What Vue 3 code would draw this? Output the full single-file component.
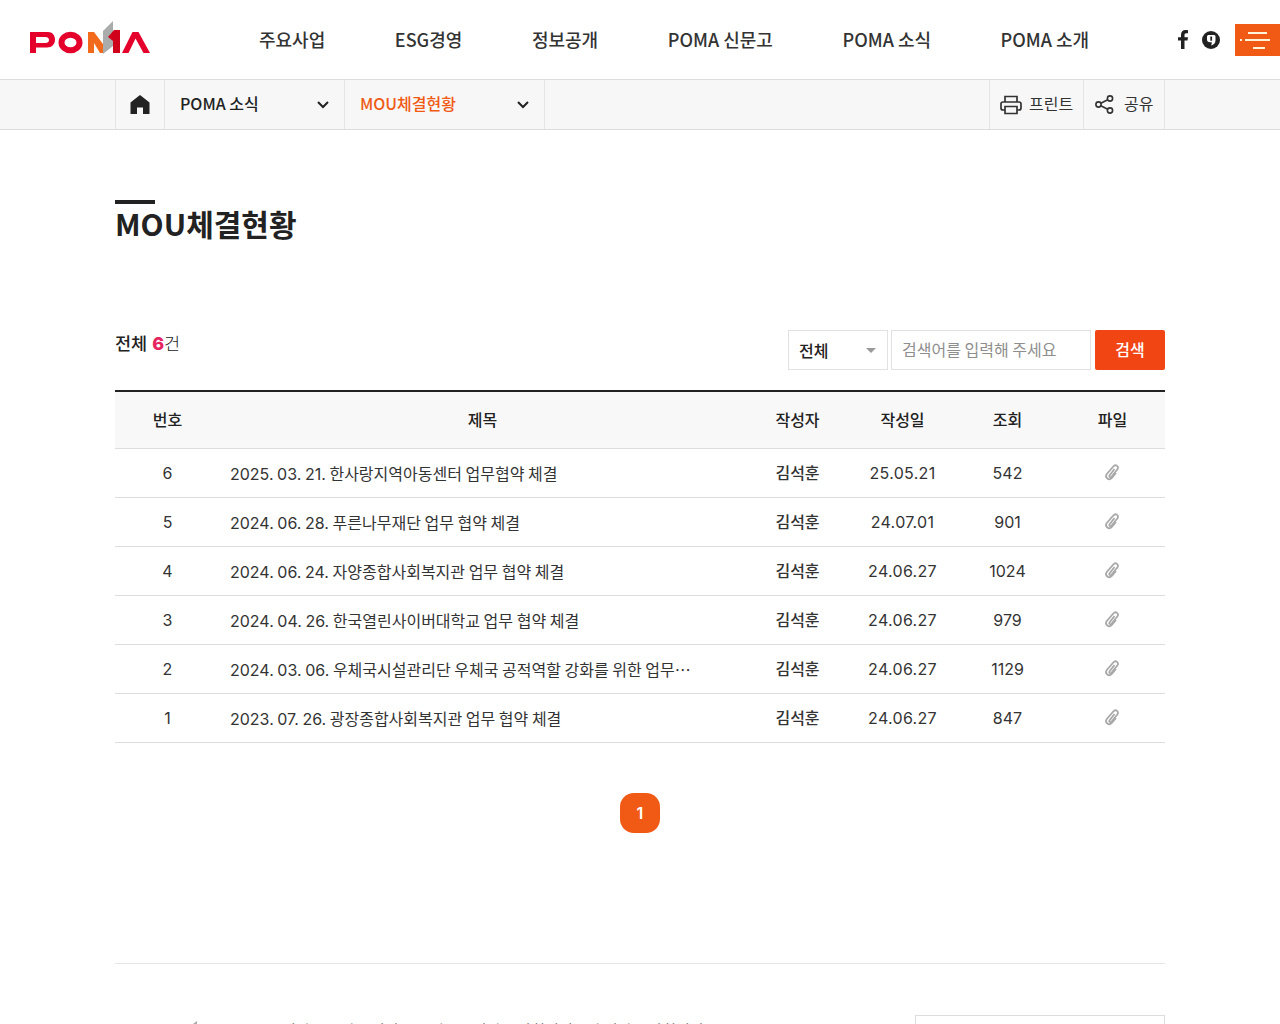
<template>
  <div class="page">
    <header class="top">
      <a class="logo" href="#" aria-label="POMA">
        <svg width="120" height="34" viewBox="0 -1 120 34">
          <path fill-rule="evenodd" d="M0 10H18C22.500 10 25 13.500 25 17.500C25 22 22 25.500 17 25.500H6V31H0zM6 15V21H15.500C17.500 21 19 19.800 19 18C19 16 17.500 15 15.500 15z" fill="#e4002b" />
          <ellipse cx="40.500" cy="20.500" rx="9" ry="7.800" fill="none" stroke="#e4002b" stroke-width="6" />
          <path d="M58 31V10h6L73 22v9h-3L64 21v10z" fill="#f26a1b" />
          <path d="M73 9l10-10v25l-10 8z" fill="#a9acab" />
          <path d="M78 15l6-7h6v23h-7V19z" fill="#d0021b" />
          <path d="M92 31l10.500-21h6L120 31h-6.500l-8-14.500L98.500 31z" fill="#e4002b" />
        </svg>
      </a>
      <nav class="gnb">
        <a v-for="m in menus" :key="m" href="#">{{ m }}</a>
      </nav>
      <div class="top-right">
        <svg class="sns" width="10" height="19" viewBox="0 0 10 19">
          <path d="M3 19V10.500H0V7.200h3V4.800C3 1.700 4.800 0 7.500 0c1 0 1.800.1 2.500.2v3H8.300C7 3.200 6.500 3.900 6.500 5v2.200H10l-.5 3.300h-3V19z" fill="#222" />
        </svg>
        <svg class="sns" width="18" height="18" viewBox="0 0 18 18">
          <circle cx="9" cy="9" r="9" fill="#222" />
          <path d="M5 5.500C5 4.500 6 4 7 4h5c1 0 1.500.8 1.500 1.700v3.600c0 2.700-1.700 4.700-4.500 5.200 .6-1 .8-2 .8-3.200H8C6 11.300 5 10.300 5 8.500z" fill="#fff" />
          <rect x="8.300" y="5.500" width="1.800" height="4.200" fill="#222" />
        </svg>
        <button class="all-menu" aria-label="menu">
          <i class="dot"></i><i class="l1"></i><i class="l2"></i><i class="l3"></i>
        </button>
      </div>
    </header>

    <div class="crumbs">
      <div class="inner">
        <a class="home" href="#" aria-label="home">
          <svg width="20" height="19" viewBox="0 0 20 19">
            <path d="M10 0L19.500 7.500V19H13V12.500H7V19H.5V7.500z" fill="#222" />
          </svg>
        </a>
        <div class="crumb first">
          <span>POMA 소식</span>
          <svg width="12" height="8" viewBox="0 0 12 8"><path d="M1 1l5 5 5-5" fill="none" stroke="#222" stroke-width="2" /></svg>
        </div>
        <div class="crumb second">
          <span>MOU체결현황</span>
          <svg width="12" height="8" viewBox="0 0 12 8"><path d="M1 1l5 5 5-5" fill="none" stroke="#222" stroke-width="2" /></svg>
        </div>
        <div class="tools">
          <a class="print" href="#">
            <svg width="22" height="20" viewBox="0 0 22 20" fill="none" stroke="#333" stroke-width="1.700">
              <path d="M5 7V1.500h12V7" />
              <path d="M5 15H3a2 2 0 0 1-2-2V9a2 2 0 0 1 2-2h16a2 2 0 0 1 2 2v4a2 2 0 0 1-2 2h-2" />
              <path d="M5 11.500h12v7H5z" />
            </svg>
            <span>프린트</span>
          </a>
          <a class="share" href="#">
            <svg width="19" height="19" viewBox="0 0 19 19" fill="none" stroke="#333" stroke-width="1.600">
              <circle cx="3.500" cy="9.500" r="2.600" />
              <circle cx="15" cy="3.500" r="2.600" />
              <circle cx="15" cy="15.500" r="2.600" />
              <path d="M5.800 8.300l6.900-3.600M5.800 10.700l6.900 3.600" />
            </svg>
            <span>공유</span>
          </a>
        </div>
      </div>
    </div>

    <main class="content">
      <h1 class="title">MOU체결현황</h1>

      <div class="board-top">
        <p class="count">전체 <b>6</b><span>건</span></p>
        <form class="search" @submit.prevent>
          <div class="select">전체<i></i></div>
          <input type="text" placeholder="검색어를 입력해 주세요" />
          <button type="submit">검색</button>
        </form>
      </div>

      <table class="board">
        <colgroup>
          <col class="c-s" /><col /><col class="c-s" /><col class="c-s" /><col class="c-s" /><col class="c-s" />
        </colgroup>
        <thead>
          <tr>
            <th>번호</th><th>제목</th><th>작성자</th><th>작성일</th><th>조회</th><th>파일</th>
          </tr>
        </thead>
        <tbody>
          <tr v-for="r in rows" :key="r.no">
            <td>{{ r.no }}</td>
            <td class="subject"><a href="#">{{ r.title }}<span v-if="r.cut" class="more">⋯</span></a></td>
            <td class="writer">김석훈</td>
            <td class="date">{{ r.date }}</td>
            <td>{{ r.views }}</td>
            <td>
              <svg class="clip" width="16" height="18" viewBox="0 0 16 18" fill="none" stroke="#a8a8a8" stroke-width="1.800">
                <path d="M10.500 5L5.500 11.500c-.8 1.200 1 2.500 2 1.300l5.800-7.300c2.300-3-1.700-5.700-4-3L2.800 10c-2.500 3.500 2.200 7 5 4l4.200-5" />
              </svg>
            </td>
          </tr>
        </tbody>
      </table>

      <div class="paging"><a href="#">1</a></div>
    </main>

    <footer class="foot">
      <div class="foot-inner">
        <div class="foot-left">
          <svg width="130" height="34" viewBox="0 0 130 34"><path d="M70 9l12-9v34H70z" fill="#a9acab" /></svg>
          <p>경기도 수원시 팔달구 효원로 1 경기도 사회서비스원 경기도 사회서비</p>
        </div>
        <div class="family"></div>
      </div>
    </footer>
  </div>
</template>

<script setup>
const menus = ["주요사업", "ESG경영", "정보공개", "POMA 신문고", "POMA 소식", "POMA 소개"];

const rows = [
  { no: 6, title: "2025. 03. 21. 한사랑지역아동센터 업무협약 체결", date: "25.05.21", views: 542 },
  { no: 5, title: "2024. 06. 28. 푸른나무재단 업무 협약 체결", date: "24.07.01", views: 901 },
  { no: 4, title: "2024. 06. 24. 자양종합사회복지관 업무 협약 체결", date: "24.06.27", views: 1024 },
  { no: 3, title: "2024. 04. 26. 한국열린사이버대학교 업무 협약 체결", date: "24.06.27", views: 979 },
  { no: 2, title: "2024. 03. 06. 우체국시설관리단 우체국 공적역할 강화를 위한 업무", cut: true, date: "24.06.27", views: 1129 },
  { no: 1, title: "2023. 07. 26. 광장종합사회복지관 업무 협약 체결", date: "24.06.27", views: 847 },
];
</script>

<style>
html, body { margin: 0; overflow-x: hidden; background: #fff; }
</style>

<style scoped>
.page {
  font-family: "Noto Sans CJK KR", "Noto Sans", sans-serif;
  color: #222;
  height: 1024px;
  overflow: hidden;
}
a { color: inherit; text-decoration: none; }

.top {
  height: 79px;
  border-bottom: 1px solid #ddd;
  display: flex;
  align-items: center;
  padding-left: 30px;
}
.logo { display: block; width: 120px; height: 34px; margin-top: -3px; }
.gnb {
  display: flex;
  gap: 69.600px;
  margin-left: 109px;
  padding-bottom: 2px;
  font-size: 18px;
  font-weight: 500;
  color: #333;
}
.top-right {
  margin-left: auto;
  display: flex;
  align-items: center;
}
.sns { display: block; }
.sns + .sns { margin-left: 14px; margin-right: 15px; }
.all-menu {
  width: 45px;
  height: 32px;
  background: #f05a14;
  border: 0;
  padding: 0;
  position: relative;
}
.all-menu i { position: absolute; height: 2px; background: #fff3d8; }
.all-menu .dot { left: 5px; width: 2px; top: 15px; }
.all-menu .l1 { left: 13px; width: 19px; top: 8px; }
.all-menu .l2 { left: 10px; width: 25px; top: 15px; }
.all-menu .l3 { left: 18px; width: 12px; top: 23px; }

.crumbs {
  height: 49px;
  background: #f7f7f7;
  border-bottom: 1px solid #ddd;
}
.inner {
  width: 1050px;
  margin: 0 auto;
  height: 100%;
  display: flex;
  border-left: 1px solid #e4e4e4;
  box-sizing: border-box;
}
.home {
  width: 48px;
  display: flex;
  align-items: center;
  justify-content: center;
  border-right: 1px solid #e4e4e4;
}
.crumb {
  display: flex;
  align-items: center;
  justify-content: space-between;
  box-sizing: border-box;
  padding: 0 15px;
  border-right: 1px solid #e4e4e4;
  font-size: 16px;
  font-weight: 500;
}
.crumb span, .tools span { margin-top: -3px; }
.crumb.first { width: 180px; }
.crumb.second { width: 200px; color: #f05a14; }
.tools { margin-left: auto; display: flex; font-size: 16px; color: #333; }
.tools a {
  display: flex;
  align-items: center;
  box-sizing: border-box;
  border-left: 1px solid #e4e4e4;
}
.print { width: 94px; padding-left: 10px; gap: 7px; }
.share { width: 82px; padding-left: 11px; gap: 10px; border-right: 1px solid #e4e4e4; }

.content { width: 1050px; margin: 0 auto; }
.title {
  margin: 70px 0 0;
  padding-top: 3px;
  font-size: 30px;
  font-weight: 700;
  line-height: 40px;
  height: 127px;
  position: relative;
}
.title::before {
  content: "";
  position: absolute;
  left: 0;
  top: 0;
  width: 40px;
  height: 4px;
  background: #222;
}

.board-top { display: flex; justify-content: space-between; height: 60px; }
.count { margin: 0; font-size: 17.500px; font-weight: 500; line-height: 26px; }
.count b { color: #e6245f; font-family: Inter, sans-serif; font-size: 18px; font-weight: 800; margin-left: 1px; }
.count span { font-weight: 300; }
.search { display: flex; height: 40px; }
.select {
  width: 100px;
  box-sizing: border-box;
  border: 1px solid #e2e2e2;
  padding-left: 10px;
  font-size: 16px;
  font-weight: 500;
  line-height: 38px;
  position: relative;
}
.select i {
  position: absolute;
  right: 11px;
  top: 17px;
  border: 5px solid transparent;
  border-top: 5px solid #999;
  border-bottom: 0;
}
.search input {
  width: 200px;
  box-sizing: border-box;
  margin-left: 3px;
  border: 1px solid #e2e2e2;
  padding: 0 10px 3px;
  font: 400 16px "Noto Sans CJK KR", sans-serif;
  outline: none;
}
.search input::placeholder { color: #8e8e8e; }
.search button {
  width: 70px;
  margin-left: 4px;
  border: 0;
  border-radius: 2px;
  background: #f24514;
  color: #fff;
  padding: 0 0 3px;
  font: 500 16px "Noto Sans CJK KR", sans-serif;
}

.board {
  width: 100%;
  table-layout: fixed;
  border-collapse: collapse;
  border-top: 2px solid #222;
}
.c-s { width: 105px; }
.board th {
  height: 54px;
  padding: 0 0 2px;
  background: #f8f8f8;
  border-bottom: 1px solid #ddd;
  font-size: 16px;
  font-weight: 500;
}
.board td {
  height: 48px;
  padding: 0;
  border-bottom: 1px solid #ddd;
  text-align: center;
  font-family: Inter, "Noto Sans CJK KR", sans-serif;
  font-size: 16px;
  color: #333;
}
.board td.subject {
  text-align: left;
  padding: 0 0 0 10px;
  overflow: hidden;
  white-space: nowrap;
  word-spacing: -0.900px;
}
.board td.date { letter-spacing: .3px; }
.more { font-family: "Noto Sans CJK KR", sans-serif; }
.board td.writer { font-family: "Noto Sans CJK KR", sans-serif; font-weight: 500; padding-bottom: 2px; height: 46px; }
.clip { display: block; margin: -1px auto 0; transform: translateX(-1px); }

.paging { display: flex; justify-content: center; margin-top: 50px; height: 170px; border-bottom: 1px solid #e6e6e6; }
.paging a {
  width: 40px;
  height: 40px;
  border-radius: 14px;
  background: #f05a14;
  color: #fff;
  font: 600 16px/40px Inter, sans-serif;
  text-align: center;
}

.foot-inner {
  width: 1050px;
  margin: 51px auto 0;
  display: flex;
  justify-content: space-between;
}
.foot-left { display: flex; align-items: flex-start; }
.foot-left svg { margin-top: 6px; }
.foot-left p { margin: 0 0 0 37px; font-size: 15px; color: #555; line-height: 20px; padding-top: 5px; }
.family {
  width: 250px;
  height: 48px;
  box-sizing: border-box;
  border: 1px solid #ddd;
}
</style>
